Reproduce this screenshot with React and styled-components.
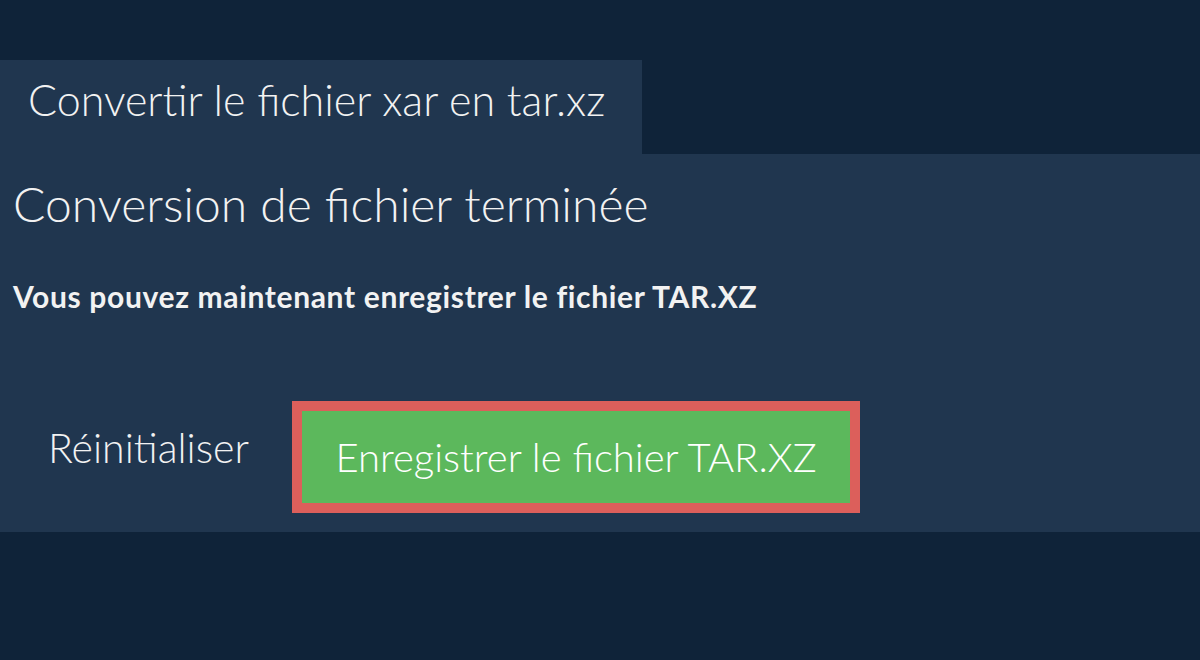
import React from "react";
import styled, { createGlobalStyle } from "styled-components";

const GlobalStyle = createGlobalStyle`
  html, body {
    margin: 0;
    padding: 0;
    background: #0f2339;
  }
  body {
    font-family: Lato, "Open Sans", "Liberation Sans", sans-serif;
    color: #f2f2f2;
  }
`;

const Page = styled.div`
  width: 1200px;
  height: 660px;
  padding-top: 60px;
  box-sizing: border-box;
  background: #0f2339;
`;

const Tab = styled.div`
  display: inline-block;
  width: 642px;
  height: 94px;
  box-sizing: border-box;
  padding: 14px 0 0 28px;
  background: #20364f;
  font-size: 43px;
  font-weight: 300;
  line-height: 52px;
  white-space: nowrap;
  vertical-align: top;
`;

const Panel = styled.section`
  height: 378px;
  box-sizing: border-box;
  padding: 20px 13px 0;
  background: #20364f;
`;

const Title = styled.h2`
  margin: 0;
  font-size: 48px;
  font-weight: 300;
  line-height: 60px;
  white-space: nowrap;
`;

const Note = styled.p`
  margin: 44px 0 0;
  font-size: 30px;
  font-weight: 700;
  line-height: 36px;
  letter-spacing: 0.65px;
  white-space: nowrap;
`;

const Actions = styled.div`
  display: flex;
  align-items: center;
  margin-top: 87px;
`;

const ResetButton = styled.button`
  border: none;
  background: none;
  padding: 0 43px 20px 35px;
  font-family: inherit;
  font-size: 41px;
  font-weight: 300;
  color: #f2f2f2;
  white-space: nowrap;
  cursor: pointer;
`;

const SaveButton = styled.button`
  width: 568px;
  height: 112px;
  box-sizing: border-box;
  padding: 0;
  border: 10px solid #dc5f5b;
  background: #5cb85c;
  font-family: inherit;
  font-size: 40px;
  font-weight: 300;
  color: #fff;
  white-space: nowrap;
  cursor: pointer;
`;

export default function App() {
  return (
    <Page>
      <GlobalStyle />
      <Tab>Convertir le fichier xar en tar.xz</Tab>
      <Panel>
        <Title>Conversion de fichier terminée</Title>
        <Note>Vous pouvez maintenant enregistrer le fichier TAR.XZ</Note>
        <Actions>
          <ResetButton>Réinitialiser</ResetButton>
          <SaveButton>Enregistrer le fichier TAR.XZ</SaveButton>
        </Actions>
      </Panel>
    </Page>
  );
}
